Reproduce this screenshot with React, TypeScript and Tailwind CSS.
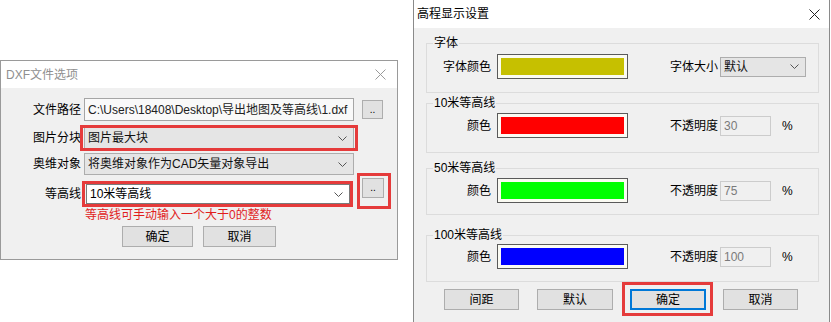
const font = "font-['Liberation_Sans','Noto_Sans_CJK_SC',sans-serif]";

function CloseIcon({ color }: { color: string }) {
  return (
    <svg width="11" height="11" viewBox="0 0 11 11" fill="none" stroke={color} strokeWidth={1}>
      <path d="M0.5 0.5 L10.5 10.5 M10.5 0.5 L0.5 10.5" />
    </svg>
  );
}

function Chevron() {
  return (
    <svg width="9" height="5" viewBox="0 0 9 5" fill="none" stroke="#555" strokeWidth={1}>
      <path d="M0.5 0.5 L4.5 4.5 L8.5 0.5" />
    </svg>
  );
}

function RedBox({ className }: { className: string }) {
  return <div className={`pointer-events-none absolute border-[3px] border-[#e53b3b] ${className}`} />;
}

function Select({ text, className }: { text: string; className: string }) {
  return (
    <div
      className={`flex items-center justify-between border border-[#adadad] bg-[#e5e5e5] pl-[3px] pr-[6px] text-[#111] ${className}`}
    >
      <span>{text}</span>
      <Chevron />
    </div>
  );
}

function DxfDialog() {
  return (
    <div className="mt-[60px] flex h-[200px] w-[398px] shrink-0 flex-col border border-[#9a9a9a] bg-[#f0f0f0]">
      <div className="flex h-[27px] items-center justify-between bg-white pl-[5px] pr-[11px] text-[#8f8f8f]">
        <span>DXF文件选项</span>
        <CloseIcon color="#9a9a9a" />
      </div>

      <div className="mt-[10px] flex h-[23px] items-center">
        <span className="w-[80px] text-right">文件路径</span>
        <div className="ml-[3px] flex h-[23px] w-[270px] items-center overflow-hidden whitespace-nowrap border border-[#a5a5a5] bg-[#f9f9f9] pl-[3px] text-[#222]">
          C:\Users\18408\Desktop\导出地图及等高线\1.dxf
        </div>
        <button className="ml-[8px] h-[19px] w-[21px] border border-[#adadad] bg-[#e1e1e1] text-[10px] leading-none">
          ..
        </button>
      </div>

      <div className="mt-[6px] flex h-[22px] items-center">
        <span className="w-[80px] text-right">图片分块</span>
        <div className="relative ml-[3px]">
          <Select text="图片最大块" className="h-[22px] w-[270px]" />
          <RedBox className="-bottom-[2px] -left-[4px] -right-[4px] -top-[2px]" />
        </div>
      </div>

      <div className="mt-[4px] flex h-[22px] items-center">
        <span className="w-[80px] text-right">奥维对象</span>
        <Select text="将奥维对象作为CAD矢量对象导出" className="ml-[3px] h-[22px] w-[270px]" />
      </div>

      <div className="flex items-start">
        <span className="mt-[9px] w-[80px] text-right leading-[20px]">等高线</span>
        <div className="relative ml-[5px] mt-[9px]">
          <div className="flex h-[20px] w-[264px] items-center justify-between border border-[#7a7a7a] bg-white pl-[3px] pr-[6px]">
            <span>10米等高线</span>
            <Chevron />
          </div>
          <RedBox className="-bottom-[3px] -left-[4px] -right-[3px] -top-[3px]" />
        </div>
        <div className="relative ml-[12px] mt-[3px]">
          <button className="h-[20px] w-[22px] border border-[#adadad] bg-[#e1e1e1] text-[10px] leading-none">
            ..
          </button>
          <RedBox className="-bottom-[11px] -left-[5px] -right-[7px] -top-[5px]" />
        </div>
      </div>

      <div className="ml-[84px] mt-[4px] leading-[14px] text-[#e11d1d]">等高线可手动输入一个大于0的整数</div>

      <div className="ml-[121px] mt-[4px] flex gap-[10px]">
        <button className="h-[21px] w-[71px] border border-[#adadad] bg-[#e1e1e1]">确定</button>
        <button className="h-[21px] w-[73px] border border-[#adadad] bg-[#e1e1e1]">取消</button>
      </div>
    </div>
  );
}

function Swatch({ color }: { color: string }) {
  return (
    <div className="ml-[6px] h-[25px] w-[131px] border border-[#5a5a5a] bg-[#fbfbf3] p-[3px]">
      <div className="h-full w-full" style={{ background: color }} />
    </div>
  );
}

function Opacity({ value }: { value: string }) {
  return (
    <>
      <span className="w-[90px] text-right">不透明度</span>
      <div className="ml-[2px] flex h-[20px] w-[51px] items-center border border-[#cccccc] bg-[#f0f0f0] pl-[3px] text-[#7a7a7a]">
        {value}
      </div>
      <span className="ml-[11px]">%</span>
    </>
  );
}

function Group({
  title,
  className,
  children,
}: {
  title: string;
  className: string;
  children: React.ReactNode;
}) {
  return (
    <fieldset className={`w-[393px] border border-[#dcdcdc] px-[6px] ${className}`}>
      <legend className="px-px leading-[16px]">{title}</legend>
      {children}
    </fieldset>
  );
}

function ElevationDialog() {
  return (
    <div className="ml-[15px] flex h-[322px] w-[417px] shrink-0 flex-col border-x border-[#8a8a8a] bg-[#f0f0f0]">
      <div className="flex h-[28px] items-center justify-between bg-white pl-[3px] pr-[9px] text-black">
        <span>高程显示设置</span>
        <CloseIcon color="#222" />
      </div>

      <div className="ml-[12px] flex flex-col">
        <Group title="字体" className="mt-[7px] h-[58px]">
          <div className="mt-[3px] flex items-center">
            <span className="w-[58px] text-right">字体颜色</span>
            <Swatch color="#c6c000" />
            <span className="w-[90px] text-right">字体大小</span>
            <Select text="默认" className="ml-[2px] h-[20px] w-[86px]" />
          </div>
        </Group>

        <Group title="10米等高线" className="mt-[2px] h-[58px]">
          <div className="mt-[2px] flex items-center">
            <span className="w-[58px] text-right">颜色</span>
            <Swatch color="#ff0000" />
            <Opacity value="30" />
          </div>
        </Group>

        <Group title="50米等高线" className="mt-[7px] h-[55px]">
          <div className="mt-[2px] flex items-center">
            <span className="w-[58px] text-right">颜色</span>
            <Swatch color="#00ff00" />
            <Opacity value="75" />
          </div>
        </Group>

        <Group title="100米等高线" className="mt-[12px] h-[55px]">
          <div className="mt-[1px] flex items-center">
            <span className="w-[58px] text-right">颜色</span>
            <Swatch color="#0000ff" />
            <Opacity value="100" />
          </div>
        </Group>

        <div className="mt-[7px] flex">
          <button className="ml-[18px] h-[21px] w-[75px] border border-[#adadad] bg-[#e1e1e1]">间距</button>
          <button className="ml-[18px] h-[21px] w-[76px] border border-[#adadad] bg-[#e1e1e1]">默认</button>
          <div className="relative ml-[17px]">
            <button className="h-[21px] w-[76px] border-2 border-[#0078d7] bg-[#e1e1e1]">确定</button>
            <RedBox className="-bottom-[6px] -left-[8px] -right-[7px] -top-[7px]" />
          </div>
          <button className="ml-[17px] h-[21px] w-[75px] border border-[#adadad] bg-[#e1e1e1]">取消</button>
        </div>
      </div>
    </div>
  );
}

export default function App() {
  return (
    <div className={`flex h-[322px] w-[831px] overflow-hidden bg-white text-[12px] leading-[16px] text-black ${font}`}>
      <DxfDialog />
      <ElevationDialog />
    </div>
  );
}
